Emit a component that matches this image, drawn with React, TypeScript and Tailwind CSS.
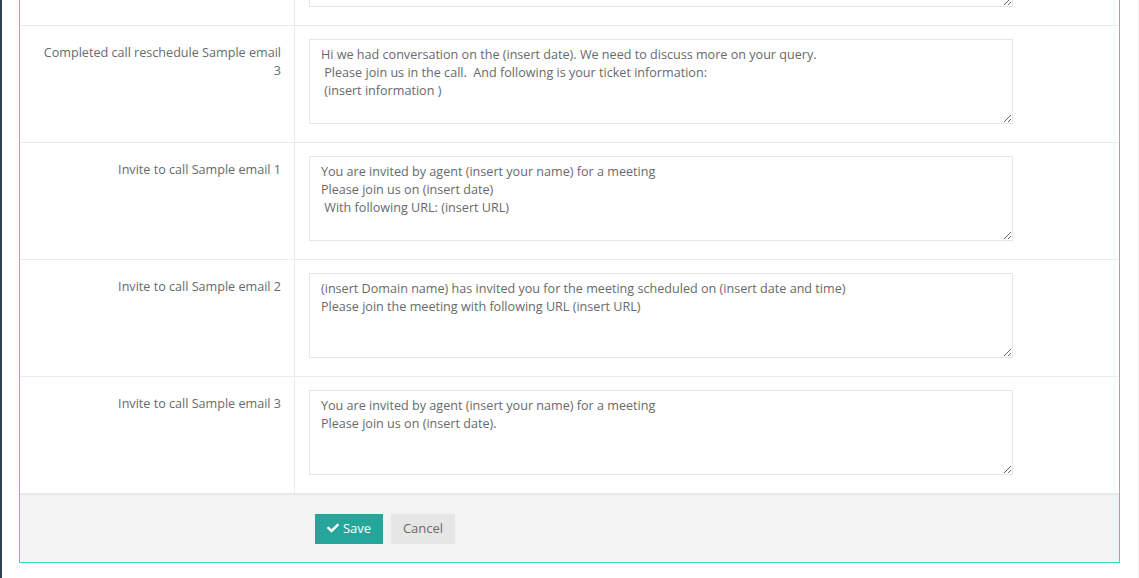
import React from "react";
import { FaCheck } from "react-icons/fa";

type Row = { label: string; text: string };

const rows: Row[] = [
  { label: "", text: "" },
  {
    label: "Completed call reschedule Sample email 3",
    text:
      "Hi we had conversation on the (insert date). We need to discuss more on your query.\n Please join us in the call.  And following is your ticket information:\n (insert information )",
  },
  {
    label: "Invite to call Sample email 1",
    text:
      "You are invited by agent (insert your name) for a meeting\nPlease join us on (insert date)\n With following URL: (insert URL)",
  },
  {
    label: "Invite to call Sample email 2",
    text:
      "(insert Domain name) has invited you for the meeting scheduled on (insert date and time)\nPlease join the meeting with following URL (insert URL)",
  },
  {
    label: "Invite to call Sample email 3",
    text:
      "You are invited by agent (insert your name) for a meeting\nPlease join us on (insert date).",
  },
];

export default function App() {
  return (
    <div
      className="flex h-[578px] w-[1139px] overflow-hidden bg-white text-[12.6px] leading-[18px] text-[#676a6c]"
      style={{ fontFamily: "'Open Sans', 'Noto Sans', sans-serif" }}
    >
      <div className="w-[2px] shrink-0 bg-[#2f4050]" />
      <div className="flex-1 border-r border-[#efefef] pl-[17px] pr-[18px]">
        <div className="-mt-[91px] border-x border-b border-x-[#2ae0bb] border-b-[#2ae0bb]">
          {rows.map((r, i) => (
            <div
              key={i}
              className="grid grid-cols-[275px_1fr] border-b border-[#ebebeb]"
            >
              <div className="border-r border-[#ebebeb] pb-[16px] pl-[15px] pr-[13px] pt-[18px] text-right">
                {r.label}
              </div>
              <div className="pb-[18px] pl-[14px] pt-[13px]">
                <textarea
                  readOnly
                  defaultValue={r.text}
                  className="block h-[85px] w-[704px] resize border border-[#e5e6e7] bg-white px-[11px] pb-[4px] pt-[6px] text-[12.6px] leading-[18px] text-[#676a6c] outline-none"
                  style={{ fontFamily: "'Open Sans', 'Noto Sans', sans-serif" }}
                />
              </div>
            </div>
          ))}
          <div className="grid grid-cols-[275px_1fr] border-t border-[#e7e7e7] bg-[#f3f3f3] pb-[18px] pt-[19px]">
            <div />
            <div className="flex gap-[8px] pl-[20px]">
              <button className="flex h-[30px] w-[68px] items-center justify-center gap-[4px] bg-[#26a69a] pb-[2px] text-[13px] text-white">
                <FaCheck className="h-[12px] w-[12px]" />
                <span>Save</span>
              </button>
              <button className="flex h-[30px] w-[64px] items-center justify-center bg-[#e6e6e6] pb-[2px] text-[13px] text-[#676a6c]">
                Cancel
              </button>
            </div>
          </div>
        </div>
      </div>
    </div>
  );
}
